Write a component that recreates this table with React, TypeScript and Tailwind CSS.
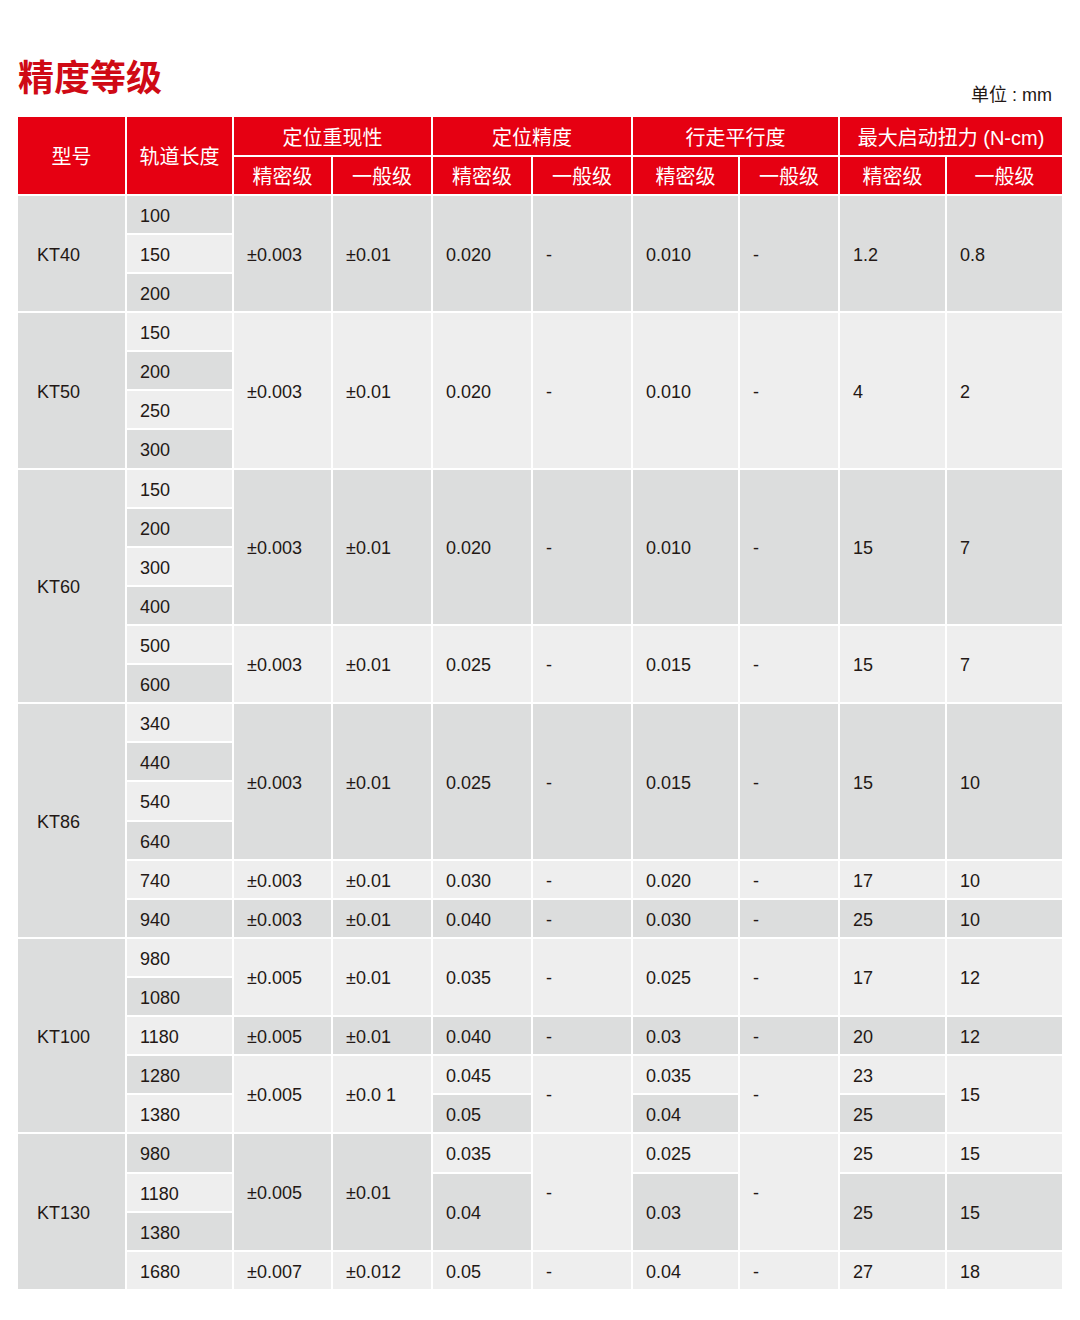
import React from "react";

type Cell = { t: string; rs?: number; dark?: boolean; model?: boolean };

const D = true;
const L = false;

const c = (t: string, dark: boolean, rs?: number): Cell => ({ t, dark, rs });
const m = (t: string, rs: number): Cell => ({ t, dark: D, rs, model: true });

// one array per body row, listed in table order (row-spanned cells appear only once)
const ROWS: Cell[][] = [
  // KT40
  [m("KT40", 3), c("100", D), c("±0.003", D, 3), c("±0.01", D, 3), c("0.020", D, 3), c("-", D, 3), c("0.010", D, 3), c("-", D, 3), c("1.2", D, 3), c("0.8", D, 3)],
  [c("150", L)],
  [c("200", D)],
  // KT50
  [m("KT50", 4), c("150", L), c("±0.003", L, 4), c("±0.01", L, 4), c("0.020", L, 4), c("-", L, 4), c("0.010", L, 4), c("-", L, 4), c("4", L, 4), c("2", L, 4)],
  [c("200", D)],
  [c("250", L)],
  [c("300", D)],
  // KT60
  [m("KT60", 6), c("150", L), c("±0.003", D, 4), c("±0.01", D, 4), c("0.020", D, 4), c("-", D, 4), c("0.010", D, 4), c("-", D, 4), c("15", D, 4), c("7", D, 4)],
  [c("200", D)],
  [c("300", L)],
  [c("400", D)],
  [c("500", L), c("±0.003", L, 2), c("±0.01", L, 2), c("0.025", L, 2), c("-", L, 2), c("0.015", L, 2), c("-", L, 2), c("15", L, 2), c("7", L, 2)],
  [c("600", D)],
  // KT86
  [m("KT86", 6), c("340", L), c("±0.003", D, 4), c("±0.01", D, 4), c("0.025", D, 4), c("-", D, 4), c("0.015", D, 4), c("-", D, 4), c("15", D, 4), c("10", D, 4)],
  [c("440", D)],
  [c("540", L)],
  [c("640", D)],
  [c("740", L), c("±0.003", L), c("±0.01", L), c("0.030", L), c("-", L), c("0.020", L), c("-", L), c("17", L), c("10", L)],
  [c("940", D), c("±0.003", D), c("±0.01", D), c("0.040", D), c("-", D), c("0.030", D), c("-", D), c("25", D), c("10", D)],
  // KT100
  [m("KT100", 5), c("980", L), c("±0.005", L, 2), c("±0.01", L, 2), c("0.035", L, 2), c("-", L, 2), c("0.025", L, 2), c("-", L, 2), c("17", L, 2), c("12", L, 2)],
  [c("1080", D)],
  [c("1180", L), c("±0.005", D), c("±0.01", D), c("0.040", D), c("-", D), c("0.03", D), c("-", D), c("20", D), c("12", D)],
  [c("1280", D), c("±0.005", L, 2), c("±0.0 1", L, 2), c("0.045", L), c("-", L, 2), c("0.035", L), c("-", L, 2), c("23", L), c("15", L, 2)],
  [c("1380", L), c("0.05", D), c("0.04", D), c("25", D)],
  // KT130
  [m("KT130", 4), c("980", D), c("±0.005", D, 3), c("±0.01", D, 3), c("0.035", L), c("-", L, 3), c("0.025", L), c("-", L, 3), c("25", L), c("15", L)],
  [c("1180", L), c("0.04", D, 2), c("0.03", D, 2), c("25", D, 2), c("15", D, 2)],
  [c("1380", D)],
  [c("1680", L), c("±0.007", L), c("±0.012", L), c("0.05", L), c("-", L), c("0.04", L), c("-", L), c("27", L), c("18", L)],
];

// a few rows are a pixel taller in the source sheet
const TALL = [6, 15, 24];

const GROUPS = ["定位重现性", "定位精度", "行走平行度", "最大启动扭力 (N-cm)"];

export default function App() {
  return (
    <div className="w-[1080px] min-h-[1320px] bg-white px-[16px] pt-[57px] font-['Liberation_Sans','Noto_Sans_CJK_SC',sans-serif]">
      <div className="flex items-end justify-between px-[2px]">
        <h1 className="mb-[11px] font-['Noto_Sans_CJK_SC',sans-serif] text-[36px] font-bold leading-none text-[#cf0a15]">
          精度等级
        </h1>
        <span className="mr-[10px] text-[18px] leading-none text-[#231815]">单位 : mm</span>
      </div>

      <table className="mt-[11px] table-fixed border-separate border-spacing-[2px]">
        <colgroup>
          <col className="w-[107px]" />
          <col className="w-[105px]" />
          <col className="w-[97px]" />
          <col className="w-[98px]" />
          <col className="w-[98px]" />
          <col className="w-[98px]" />
          <col className="w-[105px]" />
          <col className="w-[98px]" />
          <col className="w-[105px]" />
          <col className="w-[115px]" />
        </colgroup>
        <thead className="font-['Noto_Sans_CJK_SC',sans-serif] text-[20px] font-normal text-white">
          <tr className="h-[38px]">
            <th rowSpan={2} className="bg-[#e60012] p-0 pt-[1px] font-normal">型号</th>
            <th rowSpan={2} className="bg-[#e60012] p-0 pt-[1px] font-normal">轨道长度</th>
            {GROUPS.map((g) => (
              <th key={g} colSpan={2} className="bg-[#e60012] p-0 pt-[3px] font-['Liberation_Sans','Noto_Sans_CJK_SC',sans-serif] font-normal">
                {g}
              </th>
            ))}
          </tr>
          <tr className="h-[37px]">
            {GROUPS.map((g) => (
              <React.Fragment key={g}>
                <th className="bg-[#e60012] p-0 pt-[1px] font-normal">精密级</th>
                <th className="bg-[#e60012] p-0 pt-[1px] font-normal">一般级</th>
              </React.Fragment>
            ))}
          </tr>
        </thead>
        <tbody className="text-[18px] text-[#231815]">
          {ROWS.map((row, i) => (
            <tr key={i} className={TALL.includes(i) ? "h-[38px]" : "h-[37px]"}>
              {row.map((cell, j) => (
                <td
                  key={j}
                  rowSpan={cell.rs}
                  className={
                    (cell.dark ? "bg-[#dcdddd] " : "bg-[#eeeeee] ") +
                    (cell.model ? "pt-[3px] pb-0 pl-[19px] pr-0" : "pt-[3px] pb-0 pl-[13px] pr-0")
                  }
                >
                  {cell.t}
                </td>
              ))}
            </tr>
          ))}
        </tbody>
      </table>
    </div>
  );
}
